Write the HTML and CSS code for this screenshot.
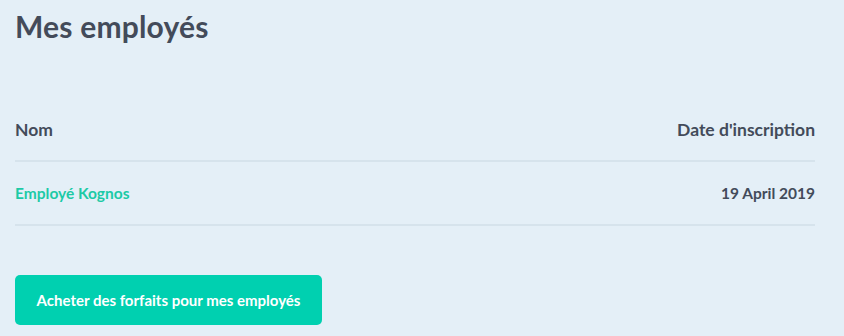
FILE: index.html
```html
<!DOCTYPE html>
<html lang="fr">
<head>
<meta charset="utf-8">
<link rel="stylesheet" href="styles.css">
</head>
<body>
<main class="page">
  <h1 class="title">Mes employés</h1>
  <table class="table">
    <thead>
      <tr><th class="left">Nom</th><th class="right">Date d'inscription</th></tr>
    </thead>
    <tbody>
      <tr><td class="left name">Employé Kognos</td><td class="right date">19 April 2019</td></tr>
    </tbody>
  </table>
  <button class="btn">Acheter des forfaits pour mes employés</button>
</main>
</body>
</html>
```
FILE: styles.css
```css
html, body { margin: 0; padding: 0; }
body {
  background: #e4eff7;
  font-family: Lato, "Open Sans", sans-serif;
  color: #434b5a;
  width: 844px;
  height: 336px;
  overflow: hidden;
}
.page { padding: 0 29px 0 15px; }
.title {
  margin: 0;
  padding-top: 8px;
  font-size: 30px;
  font-weight: 700;
  line-height: 36px;
  letter-spacing: 0.2px;
}
.table {
  width: 100%;
  border-collapse: collapse;
  margin-top: 66px;
}
.table th {
  font-size: 17.5px;
  font-weight: 700;
  padding: 10px 0 20px;
  border-bottom: 2px solid #d6e3ec;
  line-height: 20px;
}
.table td {
  font-size: 15.5px;
  font-weight: 700;
  padding: 22px 0 22px;
  border-bottom: 2px solid #d6e3ec;
  line-height: 18px;
}
.left { text-align: left; }
.right { text-align: right; }
.name { color: #1ccaa6; }
.date { color: #434b5a; }
.btn {
  margin-top: 49px;
  background: #00d0b0;
  border: none;
  border-radius: 5px;
  color: #fff;
  font-family: Lato, "Open Sans", sans-serif;
  font-weight: 700;
  font-size: 15px;
  width: 307px;
  height: 50px;
  padding: 0;
}
```
